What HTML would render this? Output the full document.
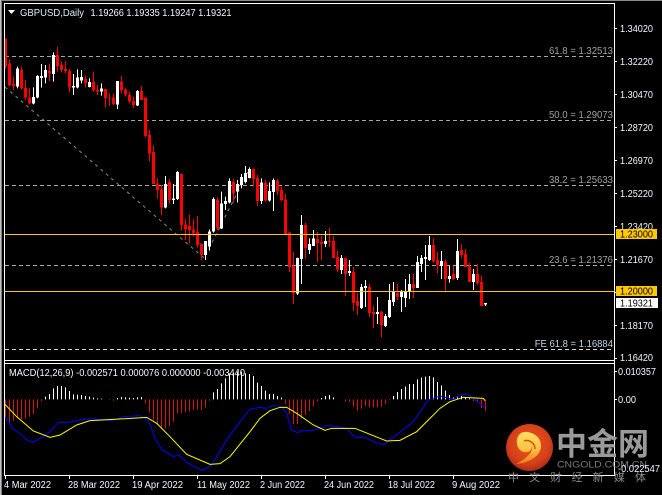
<!DOCTYPE html>
<html lang="zh"><head><meta charset="utf-8"><title>GBPUSD Daily</title>
<style>
html,body{margin:0;padding:0;background:#000}
svg{display:block}
text{font-family:"Liberation Sans","Noto Sans CJK SC",sans-serif;font-size:10px;fill:#f4f8fc}
.rw,.wh{fill:none;stroke-width:1;shape-rendering:crispEdges}
.rb,.wb{fill:none;stroke-width:3;shape-rendering:crispEdges}
.rw,.rb{stroke:#f00}.wh,.wb{stroke:#fff}
.f{fill:#a2a2a2}
</style></head><body>
<svg width="662" height="495" viewBox="0 0 662 495" xmlns="http://www.w3.org/2000/svg">
<rect width="662" height="495" fill="#000"/>
<rect width="662" height="1" fill="#8a8a8a"/>
<rect width="1" height="495" fill="#c0c0c0"/><rect x="1" width="1" height="495" fill="#808080"/>

<!-- fib lines -->
<g stroke-width="1" shape-rendering="crispEdges" fill="none">
<path d="M5 56.5H614M5 120.5H614M5 185.5H614M5 265.5H614" stroke="#a8a8a8" stroke-dasharray="4 3"/>
<path d="M5 349.5H614" stroke="#d8d8d8" stroke-dasharray="4 3"/>
</g>
<path d="M5 87L204 258L248 172" fill="none" stroke="#8c8c8c" stroke-width="1" stroke-dasharray="3 4"/>

<!-- candles, section A -->
<g transform="scale(1,.33333)">
<path class="rw" d="M5.5 115V205M9.5 178V260M13.5 230V270M21.5 200V268M25.5 240V300M29.5 265V313M49.5 192V243M57.5 141V215M61.5 185V218M65.5 183V220M69.5 207V277M85.5 228V262M93.5 215V275M97.5 255V285M105.5 267V323M109.5 280V318M113.5 280V315M121.5 228V280M125.5 265V290M129.5 275V310M133.5 290V325M141.5 258V300M145.5 293V390"/>
<path class="rb" d="M5.5 115V200M9.5 190V255M13.5 252V258M21.5 210V266M25.5 264V292M29.5 293V311M49.5 213V221M57.5 165V198M61.5 195V210M65.5 207V213M69.5 213V262M85.5 237V249M93.5 246V272M97.5 270V275M105.5 267V294M109.5 294V296M113.5 293V312M121.5 245V270M125.5 269V283M129.5 285V305M133.5 303V315M141.5 273V300M145.5 293V390"/>
<path class="wh" d="M17.5 200V265M33.5 262V313M37.5 225V295M41.5 192V263M45.5 195V250M53.5 157V245M73.5 222V285M77.5 208V265M81.5 210V250M89.5 235V262M101.5 250V287M117.5 243V327M137.5 270V318"/>
<path class="wb" d="M17.5 205V260M33.5 291V311M37.5 228V293M41.5 228V234M45.5 210V232M53.5 165V222M73.5 258V262M77.5 233V263M81.5 231V241M89.5 246V261M101.5 265V275M117.5 243V313M137.5 273V316"/>
</g>
<!-- section B -->
<g transform="translate(0,130) scale(1,.33333)">
<path class="rw" d="M145.5 0V22M149.5 0V93M153.5 47V162M157.5 145V205M161.5 165V255M169.5 148V220M181.5 130V302M185.5 268V330M189.5 255V340M193.5 268V320M197.5 258V352M201.5 340V390M217.5 202V300"/>
<path class="rb" d="M145.5 0V18M149.5 15V70M153.5 66V162M157.5 160V180M161.5 178V232M169.5 156V210M181.5 132V285M185.5 283V298M189.5 288V300M193.5 298V310M197.5 306V345M201.5 342V375M217.5 208V295"/>
<path class="wh" d="M165.5 138V235M173.5 162V222M177.5 123V210M205.5 333V390M209.5 298V362M213.5 202V308"/>
<path class="wb" d="M165.5 162V232M173.5 205V210M177.5 126V207M205.5 333V375M209.5 304V350M213.5 207V305"/>
</g>
<!-- section C -->
<g transform="translate(0,150) scale(1,.33333)">
<path class="rw" d="M233.5 87V158M253.5 55V110M257.5 75V168M265.5 90V155M277.5 87V135M281.5 110V155M285.5 132V255M289.5 245V366M293.5 306V462M305.5 219V327M317.5 246V336M321.5 258V330M329.5 234V291M333.5 258V324M337.5 303V366M345.5 324V438M353.5 351V483M357.5 429V495M369.5 402V501M373.5 468V534M381.5 483V561M397.5 402V450M413.5 372V444M433.5 264V339M437.5 306V369"/>
<path class="rb" d="M233.5 96V130M253.5 57V87M257.5 84V153M265.5 99V151M277.5 93V123M281.5 120V150M285.5 148V252M289.5 247V351M293.5 348V430M305.5 225V294M317.5 267V279M321.5 276V282M329.5 273V276M333.5 273V324M337.5 321V358M345.5 324V372M353.5 366V459M357.5 453V468M369.5 411V489M373.5 486V492M381.5 486V525M397.5 429V441M413.5 402V414M433.5 285V333M437.5 330V345"/>
<path class="wh" d="M221.5 125V237M225.5 140V180M229.5 85V160M237.5 90V157M241.5 72V115M245.5 48V100M249.5 52V85M261.5 85V162M269.5 97V155M273.5 85V183M297.5 323V435M301.5 195V402M309.5 265V312M313.5 240V288M325.5 243V291M341.5 315V372M349.5 330V378M361.5 402V477M365.5 390V471M377.5 441V522M385.5 492V531M389.5 402V504M393.5 396V468M401.5 420V486M405.5 387V471M409.5 372V447M417.5 318V414M421.5 315V366M425.5 285V390M429.5 258V333"/>
<path class="wb" d="M221.5 160V235M225.5 153V162M229.5 93V158M237.5 102V125M241.5 81V105M245.5 69V96M249.5 57V84M261.5 98V153M269.5 123V151M273.5 90V126M297.5 324V430M301.5 225V327M309.5 282V300M313.5 266V288M325.5 273V282M341.5 324V360M349.5 363V369M361.5 411V474M365.5 408V414M377.5 486V492M385.5 498V528M389.5 450V501M393.5 426V456M401.5 426V441M405.5 426V444M409.5 402V426M417.5 336V414M421.5 324V342M425.5 321V327M429.5 285V330"/>
</g>
<!-- section D -->
<g transform="translate(0,220) scale(1,.33333)">
<path class="rw" d="M445.5 118V213M453.5 138V180M461.5 72V114M465.5 87V141M469.5 129V186M477.5 132V195M481.5 168V258"/>
<path class="rb" d="M445.5 126V177M453.5 162V177M461.5 90V105M465.5 102V141M469.5 141V186M477.5 162V189M481.5 186V258"/>
<path class="wh" d="M441.5 93V177M449.5 138V188M457.5 57V180M473.5 147V210M485.5 249V258"/>
<path class="wb" d="M441.5 123V138M449.5 168V177M457.5 93V174M473.5 162V186M485.5 249V254"/>
</g>

<!-- horizontal price levels -->
<path d="M5 234.5H615M5 291.5H615" stroke="#ffc800" stroke-width="1" shape-rendering="crispEdges"/>

<!-- MACD histogram -->
<g transform="translate(0,360) scale(1,.33333)" fill="none" stroke-width="1" shape-rendering="crispEdges">
<path stroke="#d81414" d="M5.5 118V170M9.5 118V185M13.5 118V182M17.5 118V175M21.5 118V178M25.5 118V176M29.5 118V170M33.5 118V162M37.5 118V145M41.5 118V124M109.5 118V120M113.5 118V122M145.5 118V130M149.5 118V158M153.5 118V180M157.5 118V195M161.5 118V205M165.5 118V205M169.5 118V198M173.5 118V185M177.5 118V160M181.5 118V158M185.5 118V156M189.5 118V153M193.5 118V150M197.5 118V148M201.5 118V150M205.5 118V142M209.5 118V122M285.5 118V132M289.5 118V162M293.5 118V192M297.5 118V192M301.5 118V175M305.5 118V165M309.5 118V153M313.5 118V138M317.5 118V124M345.5 118V124M349.5 118V126M353.5 118V140M357.5 118V152M361.5 118V146M365.5 118V138M369.5 118V142M373.5 118V142M377.5 118V142M381.5 118V140M385.5 118V132M389.5 118V120M473.5 118V123M477.5 118V128M481.5 118V144M485.5 118V153"/>
<path stroke="#fff" d="M45.5 118V110M49.5 118V102M53.5 118V85M57.5 118V78M61.5 118V78M65.5 118V82M69.5 118V93M73.5 118V103M77.5 118V104M81.5 118V105M85.5 118V108M89.5 118V110M93.5 118V113M97.5 118V115M101.5 118V116M117.5 118V114M121.5 118V111M125.5 118V112M129.5 118V113M133.5 118V114M137.5 118V112M141.5 118V111M213.5 118V97M217.5 118V87M221.5 118V70M225.5 118V55M229.5 118V40M233.5 118V38M237.5 118V35M241.5 118V35M245.5 118V40M249.5 118V42M253.5 118V48M257.5 118V68M261.5 118V78M265.5 118V92M269.5 118V102M273.5 118V102M277.5 118V108M281.5 118V113M321.5 118V114M325.5 118V108M329.5 118V105M333.5 118V112M393.5 118V108M397.5 118V96M401.5 118V87M405.5 118V80M409.5 118V72M413.5 118V72M417.5 118V58M421.5 118V53M425.5 118V50M429.5 118V48M433.5 118V52M437.5 118V66M441.5 118V76M445.5 118V92M449.5 118V105M453.5 118V113M457.5 118V108M461.5 118V108M465.5 118V113M469.5 118V115"/>
</g>
<!-- MACD lines -->
<g fill="none" stroke-width="1">
<g transform="translate(0,360) scale(.33333)">
<polyline vector-effect="non-scaling-stroke" stroke="#0000ff" points="15,170 40,207 60,220 80,240 98,247 120,235 150,215 175,187 205,187 240,180 275,176 335,182 370,170 420,167 445,180 465,235 485,268 520,290 535,284 565,310 605,331 630,320 650,290 680,240 720,185 750,147"/>
</g>
<g transform="translate(250,360) scale(.33333)">
<polyline vector-effect="non-scaling-stroke" stroke="#0000ff" points="0,147 30,142 50,145 70,136 95,140 110,160 125,210 143,218 155,212 190,212 230,197 250,198 290,205 315,232 345,232 375,247 400,254 430,232 490,185 535,120 570,108 610,118 635,103 655,105 670,115 705,143"/>
</g>
<g transform="translate(0,360) scale(.33333)">
<polyline vector-effect="non-scaling-stroke" stroke="#ffff00" points="15,133 50,170 100,213 150,232 180,225 230,195 270,182 380,176 440,172 470,190 510,230 560,283 630,313 660,311 690,290 750,215"/>
</g>
<g transform="translate(250,360) scale(.33333)">
<polyline vector-effect="non-scaling-stroke" stroke="#ffff00" points="0,215 30,175 60,152 90,142 110,142 140,160 190,195 225,211 245,205 315,205 370,227 410,243 450,241 500,215 570,145 600,125 640,112 700,115 705,122"/>
</g>
</g>

<!-- frame -->
<g fill="none" stroke="#fff" stroke-width="1" shape-rendering="crispEdges">
<path d="M4.5 3.5H614.5V475.5H4.5ZM4.5 360.5H614.5M4.5 363.5H614.5"/>
<path d="M614 28.5h3M614 61.5h3M614 94.5h3M614 127.5h3M614 160.5h3M614 193.5h3M614 226.5h3M614 259.5h3M614 292.5h3M614 325.5h3M614 358.5h3M614 371.5h3M614 399.5h3M5.5 475V479M69.5 475V479M133.5 475V479M197.5 475V479M261.5 475V479M325.5 475V479M389.5 475V479M453.5 475V479"/>
</g>

<!-- header -->
<path d="M8 10H15L11.5 14Z" fill="#fff"/>
<text x="20" y="16" textLength="64" lengthAdjust="spacingAndGlyphs" fill="#d8ecff" style="fill:#dcecfa">GBPUSD,Daily</text>
<text x="90.5" y="16" textLength="141" lengthAdjust="spacingAndGlyphs">1.19266 1.19335 1.19247 1.19321</text>

<!-- fib labels -->
<text class="f" x="549" y="54" textLength="64" lengthAdjust="spacingAndGlyphs">61.8 = 1.32513</text>
<text class="f" x="549" y="118" textLength="64" lengthAdjust="spacingAndGlyphs">50.0 = 1.29073</text>
<text class="f" x="549" y="183" textLength="64" lengthAdjust="spacingAndGlyphs">38.2 = 1.25633</text>
<text class="f" x="549" y="263" textLength="64" lengthAdjust="spacingAndGlyphs">23.6 = 1.21376</text>
<text x="534.7" y="347" textLength="78.3" lengthAdjust="spacingAndGlyphs" style="fill:#c0d4e0">FE 61.8 = 1.16884</text>

<!-- price axis -->
<g>
<text x="620" y="32" textLength="33" lengthAdjust="spacingAndGlyphs">1.34020</text>
<text x="620" y="65" textLength="33" lengthAdjust="spacingAndGlyphs">1.32220</text>
<text x="620" y="98" textLength="33" lengthAdjust="spacingAndGlyphs">1.30470</text>
<text x="620" y="131" textLength="33" lengthAdjust="spacingAndGlyphs">1.28720</text>
<text x="620" y="164" textLength="33" lengthAdjust="spacingAndGlyphs">1.26970</text>
<text x="620" y="197" textLength="33" lengthAdjust="spacingAndGlyphs">1.25220</text>
<text x="620" y="230" textLength="33" lengthAdjust="spacingAndGlyphs">1.23420</text>
<text x="620" y="263" textLength="33" lengthAdjust="spacingAndGlyphs">1.21670</text>
<text x="620" y="329" textLength="33" lengthAdjust="spacingAndGlyphs">1.18170</text>
<text x="620" y="361" textLength="33" lengthAdjust="spacingAndGlyphs">1.16420</text>
</g>
<rect x="616" y="229" width="41" height="10" fill="#ffc800"/>
<text x="620" y="237.5" textLength="33" lengthAdjust="spacingAndGlyphs" style="fill:#000">1.23000</text>
<rect x="616" y="286" width="41" height="10" fill="#ffc800"/>
<text x="620" y="294.5" textLength="33" lengthAdjust="spacingAndGlyphs" style="fill:#000">1.20000</text>
<rect x="616" y="298" width="42" height="10" fill="#fff"/>
<text x="620" y="306.5" textLength="33" lengthAdjust="spacingAndGlyphs" style="fill:#000">1.19321</text>

<!-- MACD labels -->
<text x="9" y="376" textLength="236" lengthAdjust="spacingAndGlyphs">MACD(12,26,9) -0.002571 0.000076 0.000000 -0.003440</text>
<text x="618" y="375" textLength="38" lengthAdjust="spacingAndGlyphs">0.010357</text>
<text x="618" y="403" textLength="18" lengthAdjust="spacingAndGlyphs">0.00</text>

<!-- dates -->
<g>
<text x="4" y="488" textLength="47" lengthAdjust="spacingAndGlyphs">4 Mar 2022</text>
<text x="68" y="488" textLength="52" lengthAdjust="spacingAndGlyphs">28 Mar 2022</text>
<text x="132" y="488" textLength="51" lengthAdjust="spacingAndGlyphs">19 Apr 2022</text>
<text x="197" y="488" textLength="53" lengthAdjust="spacingAndGlyphs">11 May 2022</text>
<text x="260" y="488" textLength="45" lengthAdjust="spacingAndGlyphs">2 Jun 2022</text>
<text x="324" y="488" textLength="50" lengthAdjust="spacingAndGlyphs">24 Jun 2022</text>
<text x="388" y="488" textLength="47" lengthAdjust="spacingAndGlyphs">18 Jul 2022</text>
<text x="452" y="488" textLength="48" lengthAdjust="spacingAndGlyphs">9 Aug 2022</text>
</g>

<!-- watermark -->
<defs>
<radialGradient id="lg" cx="50%" cy="42%" r="60%"><stop offset="0" stop-color="#e8561e"/><stop offset=".7" stop-color="#d6401a"/><stop offset="1" stop-color="#a82a14"/></radialGradient>
<linearGradient id="sw" x1="0" y1="0" x2="0" y2="1"><stop offset="0" stop-color="#ffe060"/><stop offset=".55" stop-color="#fcc040"/><stop offset="1" stop-color="#ee7a1c"/></linearGradient>
</defs>
<circle cx="529.5" cy="447.5" r="23.5" fill="url(#lg)"/>
<path d="M516 464C529 463 541 456 541 446C541 438 535 433 527 432C520 431 516 437 517 444C518 451 524 453 528 452C531 451 533 447 531 444C535 450 528 458 516 464Z" fill="url(#sw)"/>
<path d="M524 441C529 439 535 443 535 449" fill="none" stroke="#d6481c" stroke-width="1.4"/>
<text x="556" y="455" textLength="93" lengthAdjust="spacingAndGlyphs" style="font-size:31px;font-weight:700;fill:#9a9a9a">中金网</text>
<text x="557" y="467.5" textLength="90" lengthAdjust="spacingAndGlyphs" style="font-size:9.5px;fill:#7c7c7c">CNGOLD.COM.CN</text>
<text x="508" y="481" textLength="138" style="font-size:11px;fill:#8c8c8c">中文财经新媒体</text>
<text x="618" y="472" textLength="42" lengthAdjust="spacingAndGlyphs">-0.022547</text>
</svg>
</body></html>
